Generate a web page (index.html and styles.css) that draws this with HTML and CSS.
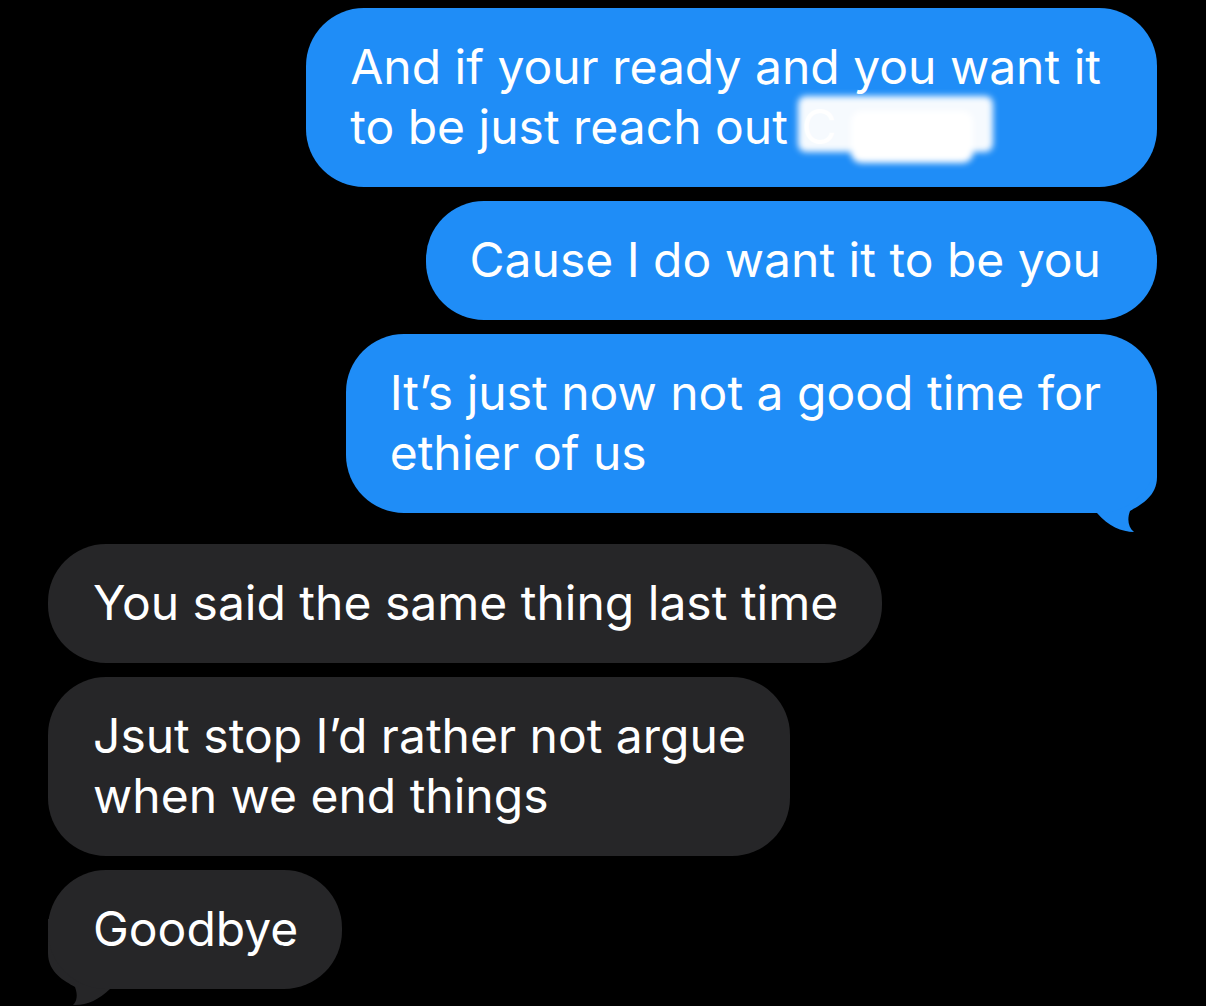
FILE: index.html
```html
<!DOCTYPE html>
<html>
<head>
<meta charset="utf-8">
<link rel="stylesheet" href="styles.css">
</head>
<body>
<div class="thread">
  <div class="bubble sent">And if your ready and you want it<br>to be just reach out <span class="redacted">C<span class="blob blob-a"></span><span class="blob blob-b"></span></span></div>
  <div class="bubble sent">Cause I do want it to be you</div>
  <div class="bubble sent tailed">It’s just now not a good time for<br>ethier of us<svg class="tail tail-sent" viewBox="0 0 80 95" width="80" height="95"><path d="M80 0 L80 34 C80 54 63 62 53 68 C50 76 51 84 57 89 C45 89 31 83 20 70 L0 70 L0 0 Z"/></svg></div>
  <div class="bubble recv first-recv">You said the same thing last time</div>
  <div class="bubble recv">Jsut stop I’d rather not argue<br>when we end things</div>
  <div class="bubble recv tailed">Goodbye<svg class="tail tail-recv" viewBox="0 0 80 95" width="80" height="95"><path d="M0 0 L0 34 C0 54 17 62 27 68 C30 76 29 82 25 86 C37 87 51 81 62 70 L80 70 L80 0 Z"/></svg></div>
</div>
</body>
</html>
```

FILE: styles.css
```css
html {
  margin: 0;
  padding: 0;
  background: #000;
}

body {
  margin: 0;
  padding: 0;
  width: 1206px;
  height: 1006px;
  overflow: hidden;
  font-family: "Inter", "Liberation Sans", sans-serif;
}

.thread {
  position: relative;
  z-index: 0;
  display: flex;
  flex-direction: column;
  gap: 14px;
  padding-top: 8px;
}

.bubble {
  position: relative;
  font-size: 48px;
  line-height: 60px;
  color: #fff;
  white-space: nowrap;
  border-radius: 58px;
  padding-top: 29px;
  padding-bottom: 30px;
}

.sent {
  align-self: flex-end;
  margin-right: 49px;
  background: #1f8df7;
  padding-left: 44px;
  padding-right: 56px;
}

.recv {
  align-self: flex-start;
  margin-left: 48px;
  background: #262628;
  padding-left: 45px;
  padding-right: 44px;
}

.first-recv {
  margin-top: 17px;
}

.tail {
  position: absolute;
  bottom: -25px;
  z-index: -1;
}

.tail-sent {
  right: 0;
  fill: #1f8df7;
}

.tail-recv {
  left: 0;
  fill: #262628;
}

.redacted {
  position: relative;
  display: inline-block;
}

.blob {
  position: absolute;
  background: #fff;
  filter: blur(3px);
}

.blob-a {
  left: -3px;
  top: -1px;
  width: 195px;
  height: 56px;
  border-radius: 8px;
  opacity: 0.96;
}

.blob-b {
  left: 50px;
  top: 14px;
  width: 122px;
  height: 52px;
  border-radius: 10px;
}
```
